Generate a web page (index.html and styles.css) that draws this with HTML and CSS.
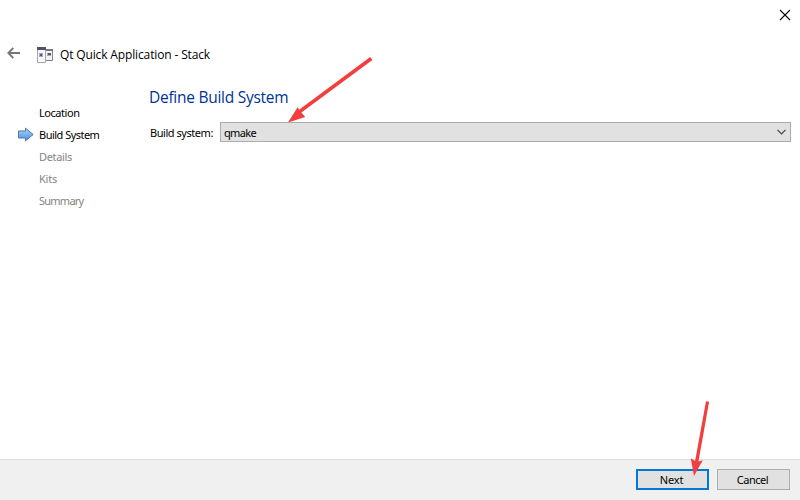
FILE: index.html
```html
<!DOCTYPE html>
<html lang="en">
<head>
<meta charset="utf-8">
<title>Qt Quick Application - Stack</title>
<link rel="stylesheet" href="styles.css">
</head>
<body>
<div class="wizard">
  <div class="titlebar">
    <svg class="close" width="12" height="12" viewBox="0 0 12 12"><path d="M1 1L11 11M11 1L1 11" stroke="#000" stroke-width="1.1"/></svg>
  </div>
  <header class="header">
    <svg class="back" width="14" height="12" viewBox="0 0 14 12"><path d="M13 6H1.5M6.3 1L1.3 6L6.3 11" fill="none" stroke="#777" stroke-width="1.8"/></svg>
    <svg class="app-icon" width="16" height="16" viewBox="0 0 16 16">
      <path d="M8.5 2.5H15.5V13.5H8.5Z" fill="#f2f2f4" stroke="#85858e"/><path d="M8 2H16V4H8Z" fill="#777985"/>
      <path d="M.5 1.5H8.5V15.5H.5Z" fill="#f7f7f9" stroke="#a5a5ad"/><path d="M0 0H9V3H0Z" fill="#4e526e"/>
      <path d="M2 6H6V10H2Z" fill="#a6a8b5"/><path d="M3 7H5V9H3Z" fill="#555870"/>
      <path d="M10 6H14V9H10Z" fill="#a6a8b5"/><path d="M11 6H14V8H11Z" fill="#555870"/>
    </svg>
    <span class="title">Qt Quick Application - Stack</span>
  </header>
  <main class="content">
    <nav class="steps">
      <div class="step done"><span class="location">Location</span></div>
      <div class="step current">
        <svg class="marker" width="18" height="16" viewBox="0 0 18 16">
          <defs><linearGradient id="blue" x2="0" y2="1"><stop stop-color="#b3d5f7"/><stop offset="1" stop-color="#488fdb"/></linearGradient></defs>
          <path d="M1.5 4H8.5V1.2L16.2 7.5L8.5 13.8V11H1.5Z" fill="url(#blue)" stroke="#4d79ab"/>
        </svg>
        <span class="build">Build System</span>
      </div>
      <div class="step"><span class="details">Details</span></div>
      <div class="step"><span class="kits">Kits</span></div>
      <div class="step"><span class="summary">Summary</span></div>
    </nav>
    <section class="page">
      <h1 class="heading">Define Build System</h1>
      <div class="field">
        <span class="label">Build system:</span>
        <div class="combo"><span class="value">qmake</span>
          <svg width="9" height="6" viewBox="0 0 9 6"><path d="M.5 .8L4.5 4.8L8.5 .8" fill="none" stroke="#444" stroke-width="1.2"/></svg>
        </div>
      </div>
    </section>
  </main>
  <footer class="footer">
    <div class="button primary"><span class="next">Next</span></div>
    <div class="button"><span class="cancel">Cancel</span></div>
  </footer>
  <svg class="annotations" width="800" height="500" viewBox="0 0 800 500">
    <g fill="#f33e3e">
      <path d="M370.2 57.1L372.4 60L301.4 112.5L305.2 117L288 122.5L297.8 107L299 109.8Z"/>
      <path d="M706 401.3L709.1 401.8L698.5 461.5L702.8 460.3L694 476L690.8 458.3L695.1 461Z"/>
    </g>
  </svg>
</div>
</body>
</html>
```
FILE: styles.css
```css
* { box-sizing: border-box; }
body { margin: 0; background: #fff; color: #000; font: 11px/14px "Noto Sans", sans-serif; letter-spacing: -.45px; }
.wizard { position: relative; width: 800px; height: 500px; display: flex; flex-direction: column; overflow: hidden; }
svg { display: block; flex: none; }
span { white-space: nowrap; }
.titlebar { height: 40px; display: flex; justify-content: flex-end; padding: 9px 9px 0 0; }
.header { height: 30px; display: flex; align-items: center; padding-left: 7px; }
.back { margin-top: -4px; }
.app-icon { margin: -1px 7px 0 16px; }
.title { font: 12px/16px "Open Sans", sans-serif; letter-spacing: -.14px; }
.content { flex: 1; display: flex; }
.steps { width: 149px; padding-top: 32px; }
.step { height: 22px; display: flex; align-items: center; padding-left: 39px; color: #838383; }
.step.done, .step.current { color: #000; }
.step.current { padding-left: 17px; }
.marker { margin-right: 4px; margin-top: -1px; }
.build { letter-spacing: -.52px; }
.details { letter-spacing: -.35px; }
.kits { letter-spacing: -.2px; }
.summary { letter-spacing: -.75px; }
.page { flex: 1; padding: 17px 9px 0 0; }
.heading { margin: 0; height: 22px; font: 400 15.5px/21px "Open Sans", sans-serif; letter-spacing: -.27px; color: #003399; }
.field { display: flex; align-items: center; margin-top: 13px; height: 20px; }
.label { width: 71px; padding: 2px 0 0 1px; }
.combo { flex: 1; height: 20px; display: flex; align-items: center; justify-content: space-between; padding: 0 4px 0 3px; border: 1px solid #adadad; background: #e1e1e1; }
.value { padding-top: 2px; letter-spacing: -.65px; }
.footer { height: 41px; display: flex; justify-content: flex-end; gap: 8px; padding: 9px 10px 0 0; border-top: 1px solid #dfdfdf; background: #f0f0f0; }
.button { width: 73px; height: 21px; display: flex; align-items: center; justify-content: center; padding-right: 2px; border: 1px solid #adadad; background: #e1e1e1; }
.next { letter-spacing: -.15px; }
.primary { border: 2px solid #0078d7; }
.annotations { position: absolute; inset: 0; pointer-events: none; }
```
